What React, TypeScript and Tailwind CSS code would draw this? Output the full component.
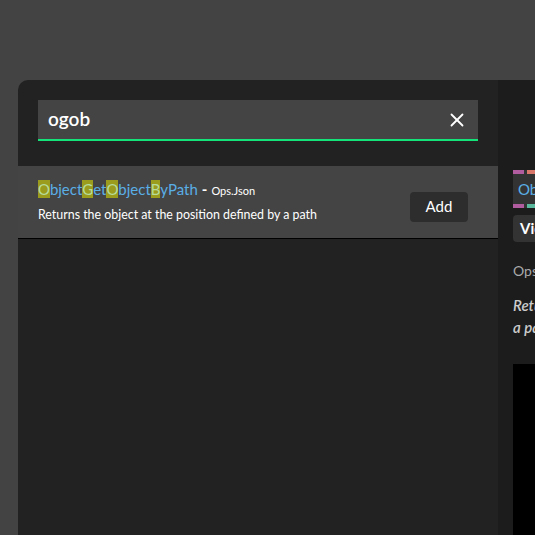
import { X } from 'lucide-react';

const title: { t: string; hit?: boolean }[] = [
    { t: 'O', hit: true },
    { t: 'bject' },
    { t: 'G', hit: true },
    { t: 'et' },
    { t: 'O', hit: true },
    { t: 'bject' },
    { t: 'B', hit: true },
    { t: 'yPath' },
];

export default function App() {
    return (
        <div className="w-[535px] h-[535px] bg-[#434343] overflow-hidden pt-[80px] pl-[18px]" style={{ fontFamily: 'Lato, "Open Sans", sans-serif' }}>
            <div className="flex w-[560px] h-[480px] rounded-tl-[10px] overflow-hidden">
                {/* Suchleiste + Ergebnisse */}
                <div className="w-[480px] shrink-0 bg-[#222222] flex flex-col">
                    <div className="px-5 pt-5 pb-[25px]">
                        <div className="h-[41px] bg-[#444444] border-b-2 border-[#14e37a] flex items-center pl-[10px] pr-[10px]">
                            <span className="flex-1 text-white text-[19px] font-semibold">ogob</span>
                            <X size={22} strokeWidth={2} className="text-white" />
                        </div>
                    </div>

                    <div className="h-[73px] bg-[#444444] border-b border-black flex items-center pl-5 pr-[30px]">
                        <div className="flex-1">
                            <div className="flex items-baseline leading-[20px]">
                                <span className="text-[15px] text-[#5aaee6]">
                                    {title.map((p, i) =>
                                        p.hit ? (
                                            <span key={i} className="bg-[#9b9b1e] text-[#b6dc9c]">{p.t}</span>
                                        ) : (
                                            <span key={i}>{p.t}</span>
                                        )
                                    )}
                                </span>
                                <span className="text-white text-[15px] font-bold ml-1">-</span>
                                <span className="text-white text-[11px] ml-1">Ops.Json</span>
                            </div>
                            <p className="text-white text-[12.4px] mt-[5px]">Returns the object at the position defined by a path</p>
                        </div>
                        <button className="w-[58px] h-[30px] bg-[#2d2d2d] rounded-[4px] text-white text-[15px] mt-[9px]">Add</button>
                    </div>
                </div>

                {/* Detailansicht */}
                <div className="flex-1 bg-[#1c1c1c] pl-[15px] pt-[90px] overflow-hidden">
                    <div className="w-[200px]">
                        <div className="bg-[#333333] h-[38px] relative flex items-center pl-[5px]">
                            <div className="absolute top-0 left-0 flex gap-[3px]">
                                <div className="w-[11px] h-[4px] bg-[#b15c9e]" />
                                <div className="w-[11px] h-[4px] bg-[#d9776b]" />
                            </div>
                            <div className="absolute bottom-0 left-0 flex gap-[3px]">
                                <div className="w-[11px] h-[4px] bg-[#b15c9e]" />
                                <div className="w-[11px] h-[4px] bg-[#5ab99d]" />
                            </div>
                            <span className="text-[15px] text-[#5aaee6]">ObjectGetObjectByPath</span>
                        </div>
                        <div className="mt-[7px] h-[27px] w-fit bg-[#333333] rounded-[4px] px-[7px] flex items-center text-white text-[15px] font-bold">View documentation</div>
                        <p className="mt-[18px] text-[14px] text-[#aaaaaa]">Ops.Json</p>
                        <p className="mt-[13px] text-[15px] italic font-semibold text-[#cccccc] leading-[22px] w-[300px]">
                            Returns the object at the position defined by
                            <br />a path
                        </p>
                        <div className="mt-[26px] h-[200px] bg-black" />
                    </div>
                </div>
            </div>
        </div>
    );
}
